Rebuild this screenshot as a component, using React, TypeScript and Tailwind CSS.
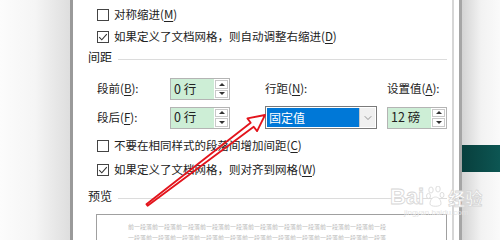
import React from 'react';
import { ChevronDown } from 'lucide-react';

const font = "font-['Noto_Sans_CJK_SC','Noto_Sans',sans-serif]";

const Mn: React.FC<{ k: string }> = ({ k }) => (
  <span>
    (<span className="underline underline-offset-2">{k}</span>)
  </span>
);

const Check: React.FC<{ checked?: boolean; children: React.ReactNode }> = ({ checked, children }) => (
  <div className="flex items-center h-[22px] pl-[24px] gap-[5px]">
    <div className="w-[12px] h-[12px] border border-[#444] bg-white flex items-center justify-center">
      {checked && (
        <svg width="10" height="10" viewBox="0 0 10 10">
          <path d="M1.2 5.2 L3.8 7.8 L8.8 2.2" fill="none" stroke="#333" strokeWidth="1.1" />
        </svg>
      )}
    </div>
    <span className="text-[11.5px] text-[#222] whitespace-nowrap">{children}</span>
  </div>
);

const GroupLabel: React.FC<{ text: string }> = ({ text }) => (
  <div className="flex items-center pl-[15px] pr-[5px] gap-[6px]">
    <span className="text-[12px] text-[#1a1a1a]">{text}</span>
    <div className="flex-1 h-px bg-[#dcdcdc] mt-[5px]" />
  </div>
);

const Spin: React.FC<{ value: string }> = ({ value }) => (
  <div className="w-[60px] h-[22px] border border-[#b4b4b4] flex bg-white">
    <div className="flex-1 bg-[#cdeed6] text-[12.5px] text-[#222] flex items-center pl-[3px]">{value}</div>
    <div className="w-[15px] flex flex-col gap-px p-px">
      <div className="flex-1 border border-[#c9c9c9] flex items-center justify-center">
        <div className="w-0 h-0 border-l-[3px] border-r-[3px] border-b-[3px] border-l-transparent border-r-transparent border-b-[#333]" />
      </div>
      <div className="flex-1 border border-[#c9c9c9] flex items-center justify-center">
        <div className="w-0 h-0 border-l-[3px] border-r-[3px] border-t-[3px] border-l-transparent border-r-transparent border-t-[#333]" />
      </div>
    </div>
  </div>
);

const previewLine = '前一段落前一段落前一段落前一段落前一段落前一段落前一段落前一段落前一段落前一段落前一段落';

export default function App() {
  return (
    <div className={`relative w-[500px] h-[240px] overflow-hidden flex bg-white ${font}`}>
      {/* left backdrop */}
      <div className="w-[70px] bg-gradient-to-r from-[#fcfcfc] via-[#f5f5f5] to-[#dedede]" />
      <div className="w-[3px] bg-[#9a9a9a]" />

      {/* dialog */}
      <div className="w-[379px] bg-white flex flex-col pt-[4px]">
        <Check>对称缩进<Mn k="M" /></Check>
        <Check checked>如果定义了文档网格，则自动调整右缩进<Mn k="D" /></Check>

        <div className="h-[18px] flex flex-col justify-center">
          <GroupLabel text="间距" />
        </div>

        <div className="mt-[12px] flex items-center pl-[24px] h-[22px] text-[11.5px] text-[#222]">
          <span className="w-[73px]">段前<Mn k="B" />:</span>
          <Spin value="0 行" />
          <span className="ml-[35px] w-[112px]">行距<Mn k="N" />:</span>
          <span className="ml-[10px]">设置值<Mn k="A" />:</span>
        </div>

        <div className="mt-[6px] flex items-center pl-[24px] h-[23px] text-[11.5px] text-[#222]">
          <span className="w-[73px]">段后<Mn k="F" />:</span>
          <Spin value="0 行" />
          <div className="ml-[35px] w-[112px] h-[23px] border border-[#7a7a7a] flex p-px bg-white">
            <div className="flex-1 bg-[#0078d7] text-white text-[12px] flex items-center pl-[2px]">固定值</div>
            <div className="w-[16px] bg-[#f0f0f0] border-l border-[#c8c8c8] flex items-center justify-center">
              <ChevronDown size={12} strokeWidth={1.2} color="#555" />
            </div>
          </div>
          <div className="ml-[10px]">
            <Spin value="12 磅" />
          </div>
        </div>

        <div className="mt-[5px] flex flex-col">
          <div className="h-[24px] flex items-center">
            <Check>不要在相同样式的段落间增加间距<Mn k="C" /></Check>
          </div>
          <div className="h-[24px] flex items-center">
            <Check checked>如果定义了文档网格，则对齐到网格<Mn k="W" /></Check>
          </div>
        </div>

        <div className="mt-[6px] h-[16px] flex flex-col justify-center">
          <GroupLabel text="预览" />
        </div>

        <div className="mt-[10px] ml-[23px] mr-[5px] flex-1 border border-[#a0a0a0] border-b-0 pt-[8px] pl-[31px] flex flex-col gap-[4px] overflow-hidden">
          <div className="text-[6px] leading-[7px] text-[#bcbcbc] whitespace-nowrap">{previewLine.slice(0, 43)}</div>
          <div className="text-[6px] leading-[7px] text-[#bcbcbc] whitespace-nowrap">{previewLine.slice(1, 45)}</div>
        </div>
      </div>

      {/* right edge */}
      <div className="w-[2px] bg-[#d6d6d6]" />
      <div className="w-[5px] bg-white" />
      <div className="w-[3px] bg-[#a6a6a6]" />
      <div className="flex-1 flex flex-col bg-gradient-to-r from-[#d4d4d4] via-[#f2f2f2] to-[#fafafa]">
        <div className="h-[145px]" />
        <div className="h-[27px] bg-gradient-to-r from-[#083f3d] to-[#0d5653]" />
      </div>

      {/* watermark */}
      <div className="absolute left-[390px] top-[186px] flex flex-col items-center pointer-events-none">
        <div className="flex items-end gap-[2px]">
          <span className="text-[22px] leading-[22px] font-bold text-white [-webkit-text-stroke:0.8px_#d6d6d6] font-['Liberation_Sans',sans-serif]">Bai</span>
          <svg width="20" height="22" viewBox="0 0 20 22">
            <g fill="white" stroke="#d6d6d6" strokeWidth="0.8">
              <ellipse cx="5" cy="4" rx="2.2" ry="3" />
              <ellipse cx="12" cy="3" rx="2.2" ry="3" />
              <ellipse cx="2.5" cy="10" rx="2" ry="2.6" />
              <ellipse cx="16" cy="9" rx="2" ry="2.6" />
              <path d="M4 18 C4 13 7 11 9.5 11 C12 11 15 13 15 18 C15 21 4 21 4 18 Z" />
            </g>
          </svg>
          <span className="text-[17px] leading-[20px] font-bold text-white [-webkit-text-stroke:0.8px_#d6d6d6]">经验</span>
        </div>
        <span className="text-[8px] leading-[10px] text-[#e4e4e4] font-['Liberation_Sans',sans-serif]">jingyan.baidu.com</span>
      </div>

      {/* red annotation arrow */}
      <svg className="absolute left-0 top-0 pointer-events-none" width="500" height="240" viewBox="0 0 500 240">
        <polygon
          points="146.4,204.2 250.7,122.7 247.4,118.4 265,115 257.1,131.1 253.7,126.7 147.6,205.8"
          fill="none"
          stroke="#e3141c"
          strokeWidth="1.8"
          strokeLinejoin="round"
        />
      </svg>
    </div>
  );
}
